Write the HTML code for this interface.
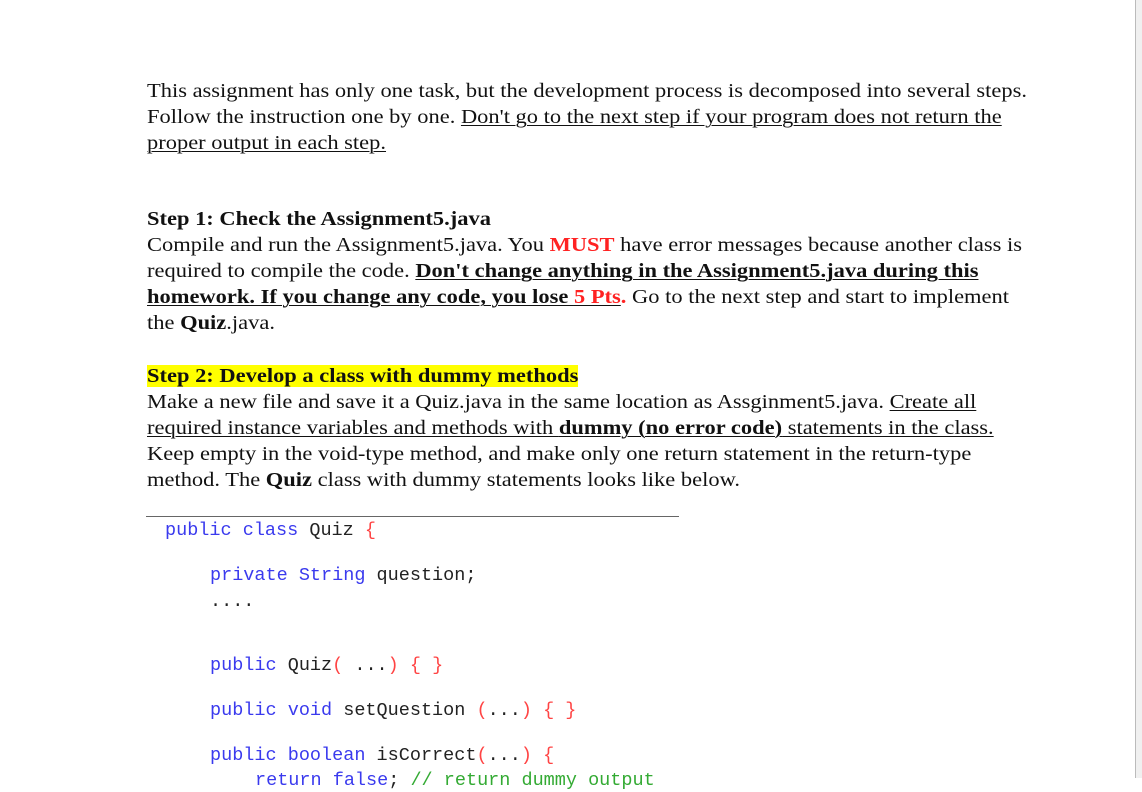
<!DOCTYPE html>
<html><head><style>
body{margin:0;width:1142px;height:778px;overflow:hidden;background:#fff;position:relative}
.sb{position:absolute;left:1135px;top:0;width:7px;height:778px;background:#f0f0f0;border-left:1px solid #bbb}
.t{position:absolute;left:147px;font-family:"Liberation Serif",serif;font-size:20.3px;color:#111;white-space:nowrap;line-height:26px;transform:scaleX(1.108);transform-origin:0 0}
.c{position:absolute;font-family:"Liberation Mono",monospace;font-size:18.5px;white-space:nowrap;color:#222;line-height:22px}
.k{color:#3a3aee}.r{color:#f44}.g{color:#3a3}
u{text-decoration-thickness:1px;text-underline-offset:2px}
.red{color:#f22}
</style></head><body>
<div class="sb"></div>
<div class="t" style="top:78px">This assignment has only one task, but the development process is decomposed into several steps.<br>Follow the instruction one by one. <u>Don't go to the next step if your program does not return the</u><br><u>proper output in each step.</u></div>
<div class="t" style="top:206px"><b>Step 1: Check the Assignment5.java</b><br>Compile and run the Assignment5.java. You <b class="red">MUST</b> have error messages because another class is<br>required to compile the code. <b><u>Don't change anything in the Assignment5.java during this</u></b><br><b><u>homework. If you change any code, you lose <span class="red">5 Pts</span></u><span class="red">.</span></b> Go to the next step and start to implement<br>the <b>Quiz</b>.java.</div>
<div class="t" style="top:363px"><b style="background:#ff0">Step 2: Develop a class with dummy methods</b><br>Make a new file and save it a Quiz.java in the same location as Assginment5.java. <u>Create all</u><br><u>required instance variables and methods with <b>dummy (no error code)</b> statements in the class.</u><br>Keep empty in the void-type method, and make only one return statement in the return-type<br>method. The <b>Quiz</b> class with dummy statements looks like below.</div>
<div style="position:absolute;left:146px;top:516px;width:533px;height:1px;background:#666"></div>
<div class="c" style="left:165px;top:520px"><span class="k">public class</span> Quiz <span class="r">{</span></div>
<div class="c" style="left:210px;top:565px"><span class="k">private String</span> question;</div>
<div class="c" style="left:210px;top:591px">....</div>
<div class="c" style="left:210px;top:655px"><span class="k">public</span> Quiz<span class="r">(</span> ...<span class="r">) { }</span></div>
<div class="c" style="left:210px;top:700px"><span class="k">public void</span> setQuestion <span class="r">(</span>...<span class="r">) { }</span></div>
<div class="c" style="left:210px;top:745px"><span class="k">public boolean</span> isCorrect<span class="r">(</span>...<span class="r">) {</span></div>
<div class="c" style="left:255px;top:770px"><span class="k">return false</span>; <span class="g">// return dummy output</span></div>
</body></html>
